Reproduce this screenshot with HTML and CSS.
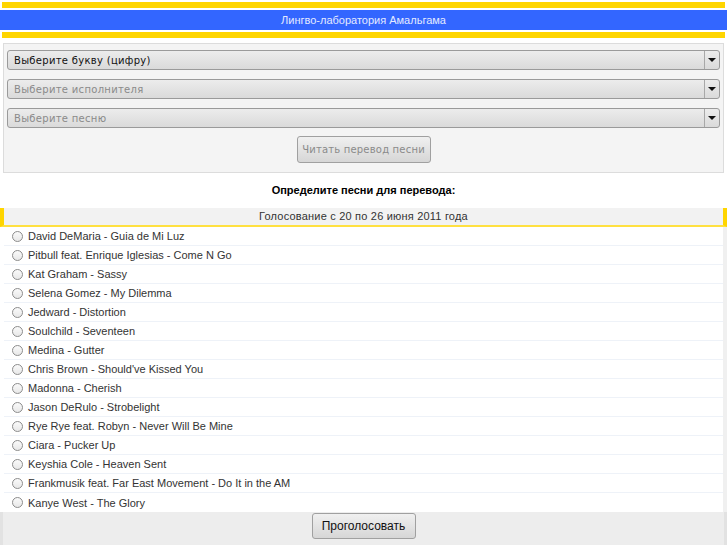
FILE: index.html
```html
<!DOCTYPE html>
<html lang="ru">
<head>
<meta charset="utf-8">
<title>Лингво-лаборатория Амальгама</title>
<link rel="stylesheet" href="styles.css">
</head>
<body>
<div class="stripe"></div>
<div class="banner">Лингво-лаборатория Амальгама</div>
<div class="stripe"></div>

<div class="form-box">
  <div class="select active"><span class="sel-text">Выберите букву (цифру)</span><span class="arrow"></span></div>
  <div class="select"><span class="sel-text">Выберите исполнителя</span><span class="arrow"></span></div>
  <div class="select"><span class="sel-text">Выберите песню</span><span class="arrow"></span></div>
  <div class="btn-row"><button class="btn read" disabled>Читать перевод песни</button></div>
</div>

<h2 class="heading">Определите песни для перевода:</h2>

<div class="poll">
  <div class="poll-head">Голосование с 20 по 26 июня 2011 года</div>
  <ul class="poll-list">
    <li><span class="radio"></span>David DeMaria - Guia de Mi Luz</li>
    <li><span class="radio"></span>Pitbull feat. Enrique Iglesias - Come N Go</li>
    <li><span class="radio"></span>Kat Graham - Sassy</li>
    <li><span class="radio"></span>Selena Gomez - My Dilemma</li>
    <li><span class="radio"></span>Jedward - Distortion</li>
    <li><span class="radio"></span>Soulchild - Seventeen</li>
    <li><span class="radio"></span>Medina - Gutter</li>
    <li><span class="radio"></span>Chris Brown - Should've Kissed You</li>
    <li><span class="radio"></span>Madonna - Cherish</li>
    <li><span class="radio"></span>Jason DeRulo - Strobelight</li>
    <li><span class="radio"></span>Rye Rye feat. Robyn - Never Will Be Mine</li>
    <li><span class="radio"></span>Ciara - Pucker Up</li>
    <li><span class="radio"></span>Keyshia Cole - Heaven Sent</li>
    <li><span class="radio"></span>Frankmusik feat. Far East Movement - Do It in the AM</li>
    <li><span class="radio"></span>Kanye West - The Glory</li>
  </ul>
  <div class="poll-foot"><button class="btn vote">Проголосовать</button></div>
</div>
</body>
</html>
```

FILE: styles.css
```css
* { box-sizing: border-box; }
html, body { margin: 0; padding: 0; background: #fff; }
body {
  font-family: "Liberation Sans", Arial, sans-serif;
  font-size: 11px;
  color: #222;
  height: 545px;
  overflow: hidden;
}
.stripe {
  height: 6px;
  margin: 2px 2px 0;
  background: #ffd500;
}
.banner {
  margin-top: 2px;
  height: 20px;
  line-height: 20px;
  background: #3366ff;
  color: #e4eaff;
  text-align: center;
  font-size: 11px;
}
.form-box {
  margin: 5px 3px 0;
  height: 130px;
  border: 1px solid #dcdcdc;
  background: #f4f4f4;
  padding: 6px 3px 0;
  display: flex;
  flex-direction: column;
  gap: 9px;
}
.select {
  height: 20px;
  border: 1px solid #9a9a9a;
  border-radius: 3px;
  background: linear-gradient(#ececec, #dadada);
  display: flex;
  align-items: center;
  font-family: "DejaVu Sans", sans-serif;
  font-size: 10px;
  letter-spacing: 0.3px;
  color: #8a8a8a;
}
.select.active { color: #111; }
.sel-text { flex: 1; padding-left: 6px; }
.arrow {
  width: 15px;
  height: 100%;
  border-left: 1px solid #a8a8a8;
  position: relative;
}
.arrow::after {
  content: "";
  position: absolute;
  left: 3px;
  top: 7px;
  border-left: 4px solid transparent;
  border-right: 4px solid transparent;
  border-top: 4px solid #111;
}
.btn-row {
  display: flex;
  justify-content: center;
  margin-top: -1px;
}
.btn {
  border: 1px solid #a0a0a0;
  border-radius: 3px;
  background: linear-gradient(#f0f0f0, #d6d6d6);
  padding: 0;
}
.btn.read {
  width: 134px;
  height: 27px;
  font-family: "DejaVu Sans", sans-serif;
  font-size: 10px;
  letter-spacing: 0.2px;
  color: #8a8a8a;
}
.heading {
  margin: 9px 0 0;
  height: 25px;
  text-align: center;
  font-size: 11px;
  font-weight: bold;
  color: #000;
  line-height: 16px;
}
.poll { margin-top: 1px; }
.poll-head {
  height: 19px;
  line-height: 16px;
  background: #f2f2f2;
  border-left: 4px solid #ffd500;
  border-right: 4px solid #ffd500;
  border-bottom: 2px solid #ffe040;
  text-align: center;
  color: #333;
  letter-spacing: 0.2px;
}
.poll-list {
  list-style: none;
  margin: 0;
  padding: 0 0 0 4px;
  border-right: 4px solid #f0f0f0;
}
.poll-list li {
  height: 19px;
  display: flex;
  align-items: center;
  border-bottom: 1px solid #eef2f8;
  color: #333;
  padding-left: 8px;
}
.poll-list li:last-child { border-bottom: none; }
.radio {
  width: 11px;
  height: 11px;
  border: 1px solid #8c8c8c;
  border-radius: 50%;
  background: linear-gradient(#fafafa, #e8e8e8);
  margin-right: 5px;
  flex: none;
}
.poll-foot {
  background: #ededed;
  border-left: 3px solid #e2e2e2;
  border-right: 3px solid #e2e2e2;
  height: 34px;
  display: flex;
  justify-content: center;
  padding-top: 1px;
}
.btn.vote {
  width: 104px;
  height: 26px;
  font-family: "Liberation Sans", Arial, sans-serif;
  font-size: 12px;
  color: #111;
}
```
